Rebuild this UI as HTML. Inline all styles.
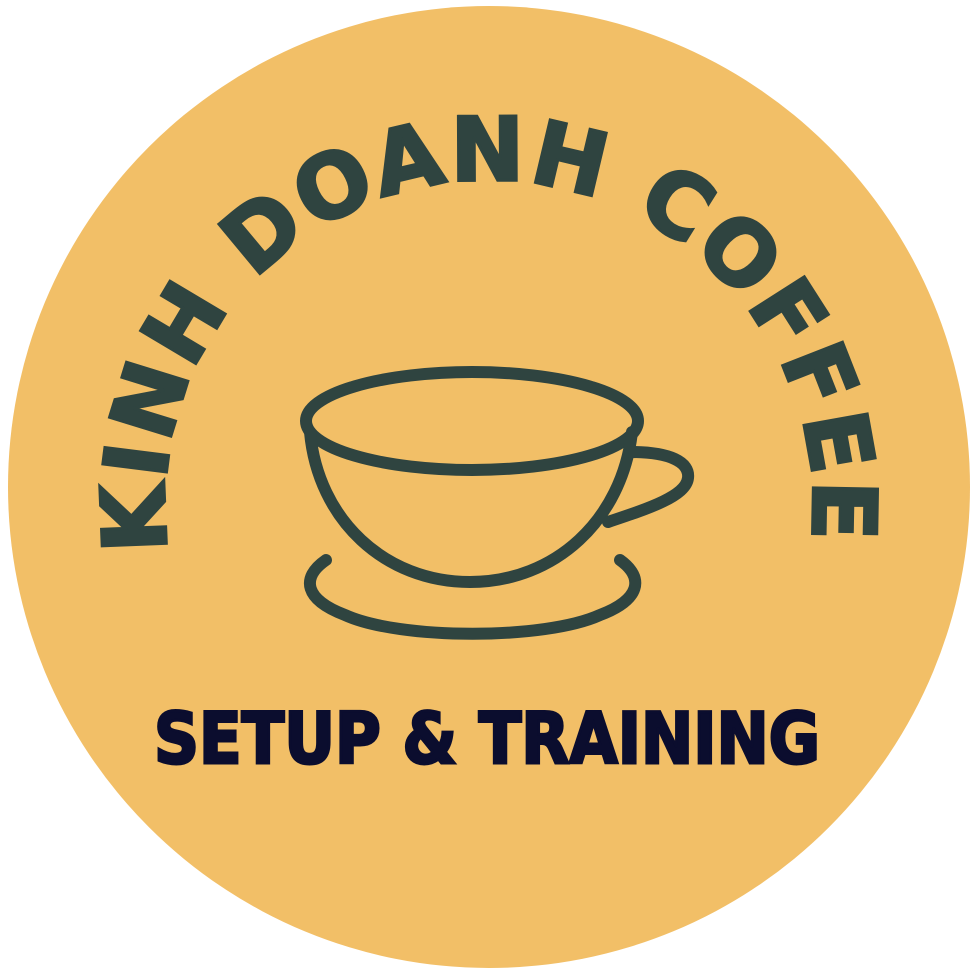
<!DOCTYPE html>
<html><head><meta charset="utf-8"><style>
html,body{margin:0;padding:0;background:#fff;}
svg{display:block}
</style></head><body>
<svg width="979" height="973" viewBox="0 0 979 973" xmlns="http://www.w3.org/2000/svg">
<circle cx="489" cy="487" r="481" fill="#F2BF67"/>
<defs>
<path id="arc" d="M 170,561 A 324 324 0 1 1 808,561"/>
</defs>
<text font-family="'DejaVu Sans', 'Liberation Sans', sans-serif" font-weight="bold" font-size="88" fill="#2F4440" stroke="#2F4440" stroke-width="3">
<textPath href="#arc" startOffset="10" textLength="1100" lengthAdjust="spacing">KINH DOANH COFFEE</textPath>
</text>
<g fill="none" stroke="#2F4440" stroke-width="12" stroke-linecap="round" stroke-linejoin="round">
<ellipse cx="472" cy="421" rx="166" ry="49"/>
<path d="M 310,432 C 318,520 385,582 470,582 C 555,582 622,520 632,432"/>
<path d="M 630,452 C 670,452 690,462 688,478 C 686,496 650,508 608,522"/>
<path d="M 326,560 C 300,578 305,600 345,615 C 400,640 545,640 600,615 C 640,600 645,578 620,560"/>
</g>
<text x="154" y="763" font-family="'DejaVu Sans', 'Liberation Sans', sans-serif" font-weight="bold" font-size="70" fill="#0B0D2E" stroke="#0B0D2E" stroke-width="3" textLength="666" lengthAdjust="spacingAndGlyphs">SETUP &amp; TRAINING</text>
</svg>
</body></html>
